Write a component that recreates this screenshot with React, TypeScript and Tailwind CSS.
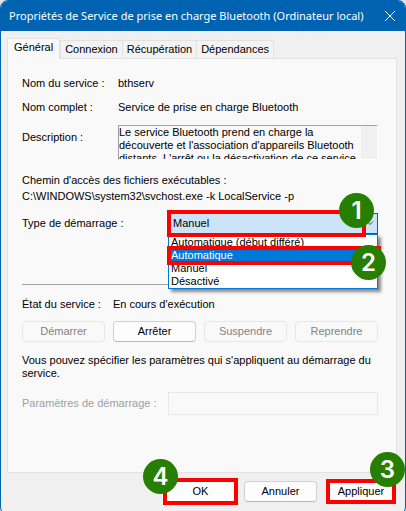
import { useState } from 'react'

const TABS = ['Général', 'Connexion', 'Récupération', 'Dépendances']
const START_TYPES = ['Automatique (début différé)', 'Automatique', 'Manuel', 'Désactivé']

function Badge({ n, className }: { n: number; className: string }) {
  return (
    <span
      className={`absolute z-20 flex size-[35px] items-center justify-center rounded-full bg-[#267f00] font-['Inter','Liberation_Sans',sans-serif] text-2xl leading-none font-semibold text-white ${className}`}
    >
      {n}
    </span>
  )
}

function ServiceButton({ label, disabled = false }: { label: string; disabled?: boolean }) {
  return (
    <button
      type="button"
      disabled={disabled}
      className="h-[21px] flex-1 rounded border border-[#d0d0d0] border-b-[#b8b8b8] bg-[#fdfdfd] disabled:border-[#e6e6e6] disabled:bg-[#f9f9f9] disabled:text-[#838383]"
    >
      {label}
    </button>
  )
}

export default function App() {
  const [tab, setTab] = useState('Général')
  const [startType, setStartType] = useState('Manuel')
  const [hovered, setHovered] = useState('Automatique')

  return (
    <div className="bg-[#dfe3e6] font-['Liberation_Sans',Arial,sans-serif] text-[11px] text-black">
      <div className="overflow-hidden rounded-lg border border-[#0063b1] bg-[#f0f0f0]">
        {/* Title bar */}
        <header className="flex h-[30px] items-center justify-between bg-[#0063b1] pr-[7px] pl-2 text-white">
          <h1 className="font-['Noto_Sans','Open_Sans',sans-serif] text-[11px] whitespace-nowrap">
            Propriétés de Service de prise en charge Bluetooth (Ordinateur local)
          </h1>
          <button type="button" aria-label="Fermer" className="flex size-4 items-center justify-center">
            <svg className="size-3" viewBox="0 0 12 12" fill="none" stroke="currentColor">
              <path d="M1 1l10 10M11 1L1 11" />
            </svg>
          </button>
        </header>

        <main className="pt-[7px] pr-2 pb-[9px] pl-[6px]">
          {/* Tabs */}
          <div role="tablist" className="flex items-end">
            {TABS.map(name => (
              <button
                key={name}
                type="button"
                role="tab"
                aria-selected={tab === name}
                onClick={() => setTab(name)}
                className={`border border-b-0 border-[#e2e2e2] whitespace-nowrap ${
                  tab === name
                    ? 'relative z-10 -mb-px h-[21px] bg-[#f9f9f9] px-[6px] pb-1'
                    : '-mr-px h-[18px] bg-[#f3f3f3] px-1'
                }`}
              >
                {name}
              </button>
            ))}
          </div>

          <section role="tabpanel" className="h-[415px] border border-[#e2e2e2] bg-[#f9f9f9] pt-4 pr-[18px] pl-[14px]">
            <dl className="grid grid-cols-[96px_1fr] gap-y-2 leading-4">
              <dt>Nom du service :</dt>
              <dd>bthserv</dd>
              <dt>Nom complet :</dt>
              <dd>Service de prise en charge Bluetooth</dd>
              <dt className="pt-[6px]">Description :</dt>
              <dd className="mt-[2px] flex h-[35px] overflow-hidden border border-[#a0a0a0] border-r-white border-b-white">
                <p className="min-w-0 flex-1 leading-[13px] whitespace-nowrap">
                  Le service Bluetooth prend en charge la
                  <br />
                  découverte et l'association d'appareils Bluetooth
                  <br />
                  distants. L'arrêt ou la désactivation de ce service
                </p>
                <span className="w-4 bg-[#f0f0f0]" />
              </dd>
            </dl>

            <p className="mt-3 leading-4">
              Chemin d'accès des fichiers exécutables :
              <br />
              C:\WINDOWS\system32\svchost.exe -k LocalService -p
            </p>

            {/* Startup type */}
            <div className="mt-[9px] flex items-center">
              <label htmlFor="start-type" className="w-[146px]">
                Type de démarrage :
              </label>
              <div className="relative flex-1">
                <select
                  id="start-type"
                  value={startType}
                  onChange={e => setStartType(e.target.value)}
                  className="block h-[21px] w-full appearance-none border border-[#0063b1] bg-[#cce4f7] pl-1 outline-none"
                >
                  {START_TYPES.map(type => (
                    <option key={type}>{type}</option>
                  ))}
                </select>
                <svg
                  className="pointer-events-none absolute top-2 right-1 h-[5px] w-2"
                  viewBox="0 0 8 5"
                  fill="none"
                  stroke="#444"
                >
                  <path d="M1 .5l3 3 3-3" />
                </svg>
                <span className="pointer-events-none absolute -top-[3px] right-3 -bottom-[3px] -left-px z-10 border-4 border-[#ff0000]" />

                <ul
                  role="listbox"
                  aria-label="Type de démarrage"
                  className="absolute inset-x-0 top-[21px] border border-[#0078d7] bg-white pt-px leading-[13px] shadow-[3px_3px_3px_rgba(0,0,0,0.45)]"
                >
                  {START_TYPES.map(type => (
                    <li
                      key={type}
                      role="option"
                      aria-selected={startType === type}
                      onMouseEnter={() => setHovered(type)}
                      onClick={() => setStartType(type)}
                      className={`pl-[2px] ${hovered === type ? 'bg-[#0078d7] text-white' : ''}`}
                    >
                      {type}
                    </li>
                  ))}
                </ul>
                <span className="pointer-events-none absolute top-[33px] -right-[3px] -left-px h-[19px] border-4 border-[#ff0000]" />
                <Badge n={1} className="-top-5 right-1" />
                <Badge n={2} className="top-8 -right-2" />
              </div>
            </div>

            <hr className="mt-[50px] border-[#a0a0a0]" />

            <p className="mt-[11px] flex gap-3 leading-4">
              <span>État du service :</span>
              <span>En cours d'exécution</span>
            </p>

            <div className="mt-[9px] flex gap-2">
              <ServiceButton label="Démarrer" disabled />
              <ServiceButton label="Arrêter" />
              <ServiceButton label="Suspendre" disabled />
              <ServiceButton label="Reprendre" disabled />
            </div>

            <p className="mt-3 leading-[13px]">
              Vous pouvez spécifier les paramètres qui s'appliquent au démarrage du service.
            </p>

            <div className="mt-3 flex items-center">
              <label htmlFor="start-params" className="w-[146px] whitespace-nowrap text-[#a0a0a0]">
                Paramètres de démarrage :
              </label>
              <input
                id="start-params"
                type="text"
                disabled
                className="h-[23px] min-w-0 flex-1 border border-[#e8e8e8] bg-[#f9f9f9] px-1"
              />
            </div>
          </section>

          {/* Dialog buttons */}
          <footer className="mt-[5px] flex items-center justify-end gap-[6px] pr-px">
            <div className="relative">
              <button type="button" className="block h-[27px] w-[75px] border-4 border-[#ff0000] bg-[#fdfdfd]">
                OK
              </button>
              <Badge n={4} className="-top-[19px] -left-5" />
            </div>
            <button
              type="button"
              className="h-[21px] w-[73px] rounded border border-[#d0d0d0] border-b-[#b8b8b8] bg-[#fdfdfd]"
            >
              Annuler
            </button>
            <div className="relative ml-[3px]">
              <button
                type="button"
                className="block h-[25px] w-[70px] border-4 border-[#ff0000] bg-[#fdfdfd] whitespace-nowrap"
              >
                Appliquer
              </button>
              <Badge n={3} className="-top-[27px] -right-[9px]" />
            </div>
          </footer>
        </main>
      </div>
    </div>
  )
}
